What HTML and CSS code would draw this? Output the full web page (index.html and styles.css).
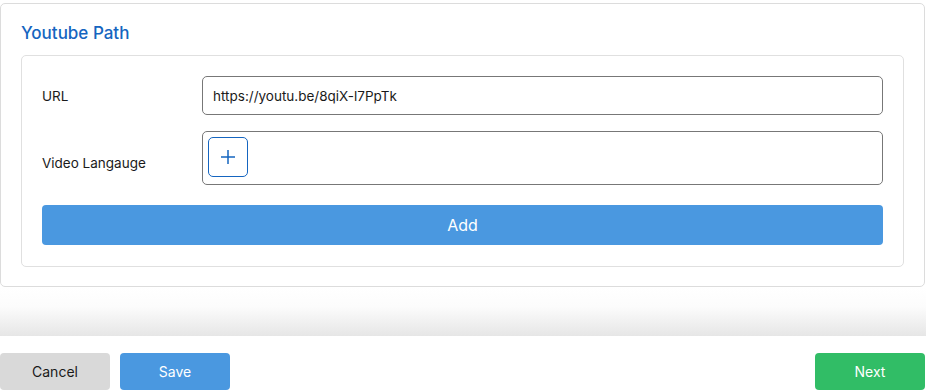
FILE: index.html
```html
<!DOCTYPE html>
<html>
<head>
<meta charset="utf-8">
<link rel="stylesheet" href="styles.css">
</head>
<body>
<div class="page">
  <section class="card">
    <h2 class="card-title">Youtube Path</h2>
    <div class="panel">
      <div class="row">
        <label class="label">URL</label>
        <div class="input">https://youtu.be/8qiX-l7PpTk</div>
      </div>
      <div class="row">
        <label class="label label-low">Video Langauge</label>
        <div class="tags">
          <button class="plus" type="button">
            <svg width="16" height="16" viewBox="0 0 16 16"><path d="M8 1v14M1 8h14" stroke="#1565c0" stroke-width="1.5" fill="none"/></svg>
          </button>
        </div>
      </div>
      <button class="add" type="button">Add</button>
    </div>
  </section>
  <div class="shade"></div>
  <footer class="footer">
    <div class="left">
      <button class="btn cancel" type="button">Cancel</button>
      <button class="btn save" type="button">Save</button>
    </div>
    <button class="btn next" type="button">Next</button>
  </footer>
</div>
</body>
</html>
```

FILE: styles.css
```css
* { box-sizing: border-box; }
html, body { margin: 0; padding: 0; background: #fff; }
body {
  font-family: Inter, "Helvetica Neue", Arial, sans-serif;
  font-size: 13.5px;
  color: #1a1a1a;
  width: 926px;
  height: 392px;
  overflow: hidden;
}
.page { display: flex; flex-direction: column; height: 392px; }
.card {
  margin: 3px 1px 0 0;
  border: 1px solid #dcdcdc;
  border-radius: 5px;
  padding: 20px 20px 20px 20px;
  height: 284px;
}
.card-title {
  margin: 0 0 12px;
  font-size: 17px;
  font-weight: 500;
  line-height: 19px;
  color: #1565c0;
}
.panel {
  border: 1px solid #e0e0e0;
  border-radius: 5px;
  padding: 20px 20px 21px;
  display: flex;
  flex-direction: column;
}
.row { display: flex; align-items: center; margin-bottom: 16px; }
.row + .row { margin-bottom: 20px; }
.label { width: 160px; flex: none; }
.label-low { padding-top: 9px; }
.input {
  flex: 1;
  height: 39px;
  border: 1px solid #777;
  border-radius: 5px;
  padding: 0 10px;
  display: flex;
  align-items: center;
}
.tags {
  flex: 1;
  height: 54px;
  border: 1px solid #777;
  border-radius: 5px;
  padding: 5px;
}
.plus {
  width: 40px;
  height: 40px;
  border: 1px solid #1565c0;
  border-radius: 5px;
  background: #fff;
  display: flex;
  align-items: center;
  justify-content: center;
  padding: 0;
}
.add {
  height: 40px;
  border: none;
  border-radius: 4px;
  background: #4a98e0;
  color: #fff;
  font-family: inherit;
  font-size: 16px;
}
.shade {
  height: 49px;
  background: linear-gradient(#fff 0%, #fcfcfc 40%, #e6e6e6 100%);
}
.footer {
  flex: 1;
  display: flex;
  justify-content: space-between;
  padding: 17px 1px 0 0;
}
.left { display: flex; gap: 10px; }
.btn {
  width: 110px;
  height: 37px;
  border: none;
  border-radius: 4px;
  font-family: inherit;
  font-size: 14px;
}
.cancel { background: #d9d9d9; color: #1a1a1a; }
.save { background: #4a98e0; color: #fff; }
.next { background: #31bd66; color: #fff; }
```
